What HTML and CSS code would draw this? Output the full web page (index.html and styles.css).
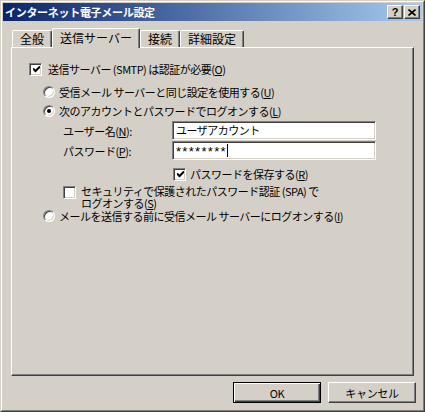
FILE: index.html
```html
<!DOCTYPE html>
<html lang="ja">
<head>
<meta charset="utf-8">
<title>インターネット電子メール設定</title>
<link rel="stylesheet" href="styles.css">
</head>
<body>
<div class="window">
  <div class="window-inner">
    <div class="titlebar">
      <span class="title">インターネット電子メール設定</span>
      <div class="tb-buttons">
        <span class="tb-btn help">?</span>
        <span class="tb-btn close"><svg width="8" height="7" viewBox="0 0 8 7"><path d="M0.5 0.5 L7.5 6.5 M7.5 0.5 L0.5 6.5" stroke="#000" stroke-width="1.6" fill="none"/></svg></span>
      </div>
    </div>
    <div class="tabs">
      <div class="tab">全般</div>
      <div class="tab active">送信サーバー</div>
      <div class="tab">接続</div>
      <div class="tab">詳細設定</div>
    </div>
    <div class="panel">
      <div class="row r1">
        <span class="cb"><svg width="7" height="7" viewBox="0 0 7 7"><path d="M0 2.5 L2.5 5 L7 0.5" stroke="#000" stroke-width="2" fill="none"/></svg></span>
        <span class="lbl">送信サーバー (SMTP) は認証が必要(<u>O</u>)</span>
      </div>
      <div class="row r2">
        <span class="radio"></span>
        <span class="lbl">受信メール サーバーと同じ設定を使用する(<u>U</u>)</span>
      </div>
      <div class="row r3">
        <span class="radio on"><span class="dot"></span></span>
        <span class="lbl">次のアカウントとパスワードでログオンする(<u>L</u>)</span>
      </div>
      <div class="row field r4">
        <span class="flabel">ユーザー名(<u>N</u>):</span>
        <span class="input">ユーザアカウント</span>
      </div>
      <div class="row field r5">
        <span class="flabel">パスワード(<u>P</u>):</span>
        <span class="input pw">********<span class="caret"></span></span>
      </div>
      <div class="row r6">
        <span class="cb"><svg width="7" height="7" viewBox="0 0 7 7"><path d="M0 2.5 L2.5 5 L7 0.5" stroke="#000" stroke-width="2" fill="none"/></svg></span>
        <span class="lbl">パスワードを保存する(<u>R</u>)</span>
      </div>
      <div class="row r7">
        <span class="cb"></span>
        <span class="lbl multi">セキュリティで保護されたパスワード認証 (SPA) で<br>ログオンする(<u>S</u>)</span>
      </div>
      <div class="row r8">
        <span class="radio"></span>
        <span class="lbl">メールを送信する前に受信メール サーバーにログオンする(<u>I</u>)</span>
      </div>
    </div>
    <div class="buttons">
      <span class="btn default"><span class="btn-face">OK</span></span>
      <span class="btn"><span class="btn-face">キャンセル</span></span>
    </div>
  </div>
</div>
</body>
</html>
```
FILE: styles.css
```css
* { box-sizing: border-box; }
html, body { margin: 0; padding: 0; }
body {
  background: #d4d0c8;
  font-family: "Noto Sans CJK JP", "Liberation Sans", sans-serif;
  font-size: 11px;
  color: #000;
}
.window {
  width: 425px;
  height: 412px;
  border: 1px solid;
  border-color: #d4d0c8 #404040 #404040 #d4d0c8;
  background: #d4d0c8;
}
.window-inner {
  height: 100%;
  border: 1px solid;
  border-color: #fff #808080 #808080 #fff;
  padding: 1px;
  display: flex;
  flex-direction: column;
}
.titlebar {
  height: 18px;
  flex: none;
  display: flex;
  align-items: center;
  justify-content: space-between;
  background: linear-gradient(to right, #0a246a, #a6caf0);
  padding: 0 2px 0 2px;
}
.title {
  color: #fff;
  font-weight: bold;
  font-size: 11px;
  line-height: 18px;
  letter-spacing: -0.3px;
}
.tb-buttons { display: flex; gap: 1px; }
.tb-btn {
  width: 16px;
  height: 14px;
  border: 1px solid;
  border-color: #fff #404040 #404040 #fff;
  box-shadow: inset -1px -1px #808080;
  background: #d4d0c8;
  display: flex;
  align-items: center;
  justify-content: center;
}
.tb-btn.help {
  font-family: "Liberation Sans", sans-serif;
  font-weight: bold;
  font-size: 11px;
  line-height: 12px;
}
.tabs {
  flex: none;
  display: flex;
  align-items: flex-end;
  padding: 7px 0 0 9px;
  height: 26px;
  position: relative;
  z-index: 1;
}
.tab {
  height: 17px;
  padding: 0 7px;
  font-size: 12px;
  line-height: 16px;
  border-top: 1px solid #fff;
  border-left: 1px solid #fff;
  border-right: 1px solid #404040;
  box-shadow: inset -1px 0 #808080;
  border-radius: 2px 2px 0 0;
  background: #d4d0c8;
}
.tab.active {
  height: 20px;
  margin-bottom: -1px;
  line-height: 17px;
}
.panel {
  flex: none;
  height: 329px;
  margin: 0 8px;
  border: 1px solid;
  border-color: #fff #404040 #404040 #fff;
  box-shadow: inset -1px -1px #808080;
  padding-top: 14px;
  display: flex;
  flex-direction: column;
  align-items: flex-start;
  letter-spacing: -0.5px;
}
.row {
  display: flex;
  align-items: center;
  height: 14px;
  line-height: 14px;
  white-space: nowrap;
}
.cb {
  width: 13px;
  height: 13px;
  flex: none;
  background: #fff;
  border: 1px solid;
  border-color: #808080 #fff #fff #808080;
  box-shadow: inset 1px 1px #404040, inset -1px -1px #d4d0c8;
  display: flex;
  align-items: center;
  justify-content: center;
}
.cb svg { display: block; margin-left: 1px; margin-top: 1px; }
.radio {
  width: 12px;
  height: 12px;
  flex: none;
  border-radius: 50%;
  background: #fff;
  border: 1px solid;
  border-color: #808080 #fff #fff #808080;
  box-shadow: inset 1px 1px #404040, inset -1px -1px #d4d0c8;
  display: flex;
  align-items: center;
  justify-content: center;
}
.dot {
  width: 4px;
  height: 4px;
  border-radius: 50%;
  background: #000;
}
.r1 { margin-left: 17px; gap: 6px; }
.r2 { margin-top: 9px; margin-left: 31px; gap: 4px; }
.r3 { margin-top: 5px; margin-left: 31px; gap: 4px; }
.field { height: 19px; margin-left: 51px; }
.r4 { margin-top: 3px; }
.r5 { margin-top: 1px; }
.flabel { width: 109px; flex: none; }
.input {
  width: 204px;
  height: 19px;
  background: #fff;
  border: 1px solid;
  border-color: #808080 #fff #fff #808080;
  box-shadow: inset 1px 1px #404040, inset -1px -1px #d4d0c8;
  padding: 0 3px;
  line-height: 17px;
  display: flex;
  align-items: center;
}
.input.pw {
  font-family: "Liberation Sans", sans-serif;
  font-size: 13px;
  letter-spacing: 1.3px;
  align-items: flex-start;
  padding-top: 1px;
}
.caret { width: 1px; height: 13px; background: #000; margin-left: 0; margin-top: 1px; }
.r6 { margin-top: 7px; margin-left: 161px; gap: 4px; }
.r7 {
  margin-top: 4px;
  margin-left: 51px;
  gap: 5px;
  height: 24px;
  align-items: flex-start;
}
.r7 .cb { margin-top: 1px; }
.lbl.multi { line-height: 12px; }
.r8 { margin-top: 0; margin-left: 31px; gap: 4px; }
.buttons {
  flex: none;
  display: flex;
  justify-content: flex-end;
  gap: 7px;
  margin-top: 6px;
  padding-right: 6px;
}
.btn {
  width: 88px;
  height: 21px;
  display: flex;
  background: #d4d0c8;
  border: 1px solid;
  border-color: #fff #404040 #404040 #fff;
  box-shadow: inset -1px -1px #808080;
}
.btn.default {
  border: 1px solid #000;
  box-shadow: inset 1px 1px #fff, inset -1px -1px #404040, inset -2px -2px #808080;
}
.btn-face {
  flex: 1;
  display: flex;
  align-items: center;
  justify-content: center;
  font-size: 11px;
  letter-spacing: -0.3px;
}
```
